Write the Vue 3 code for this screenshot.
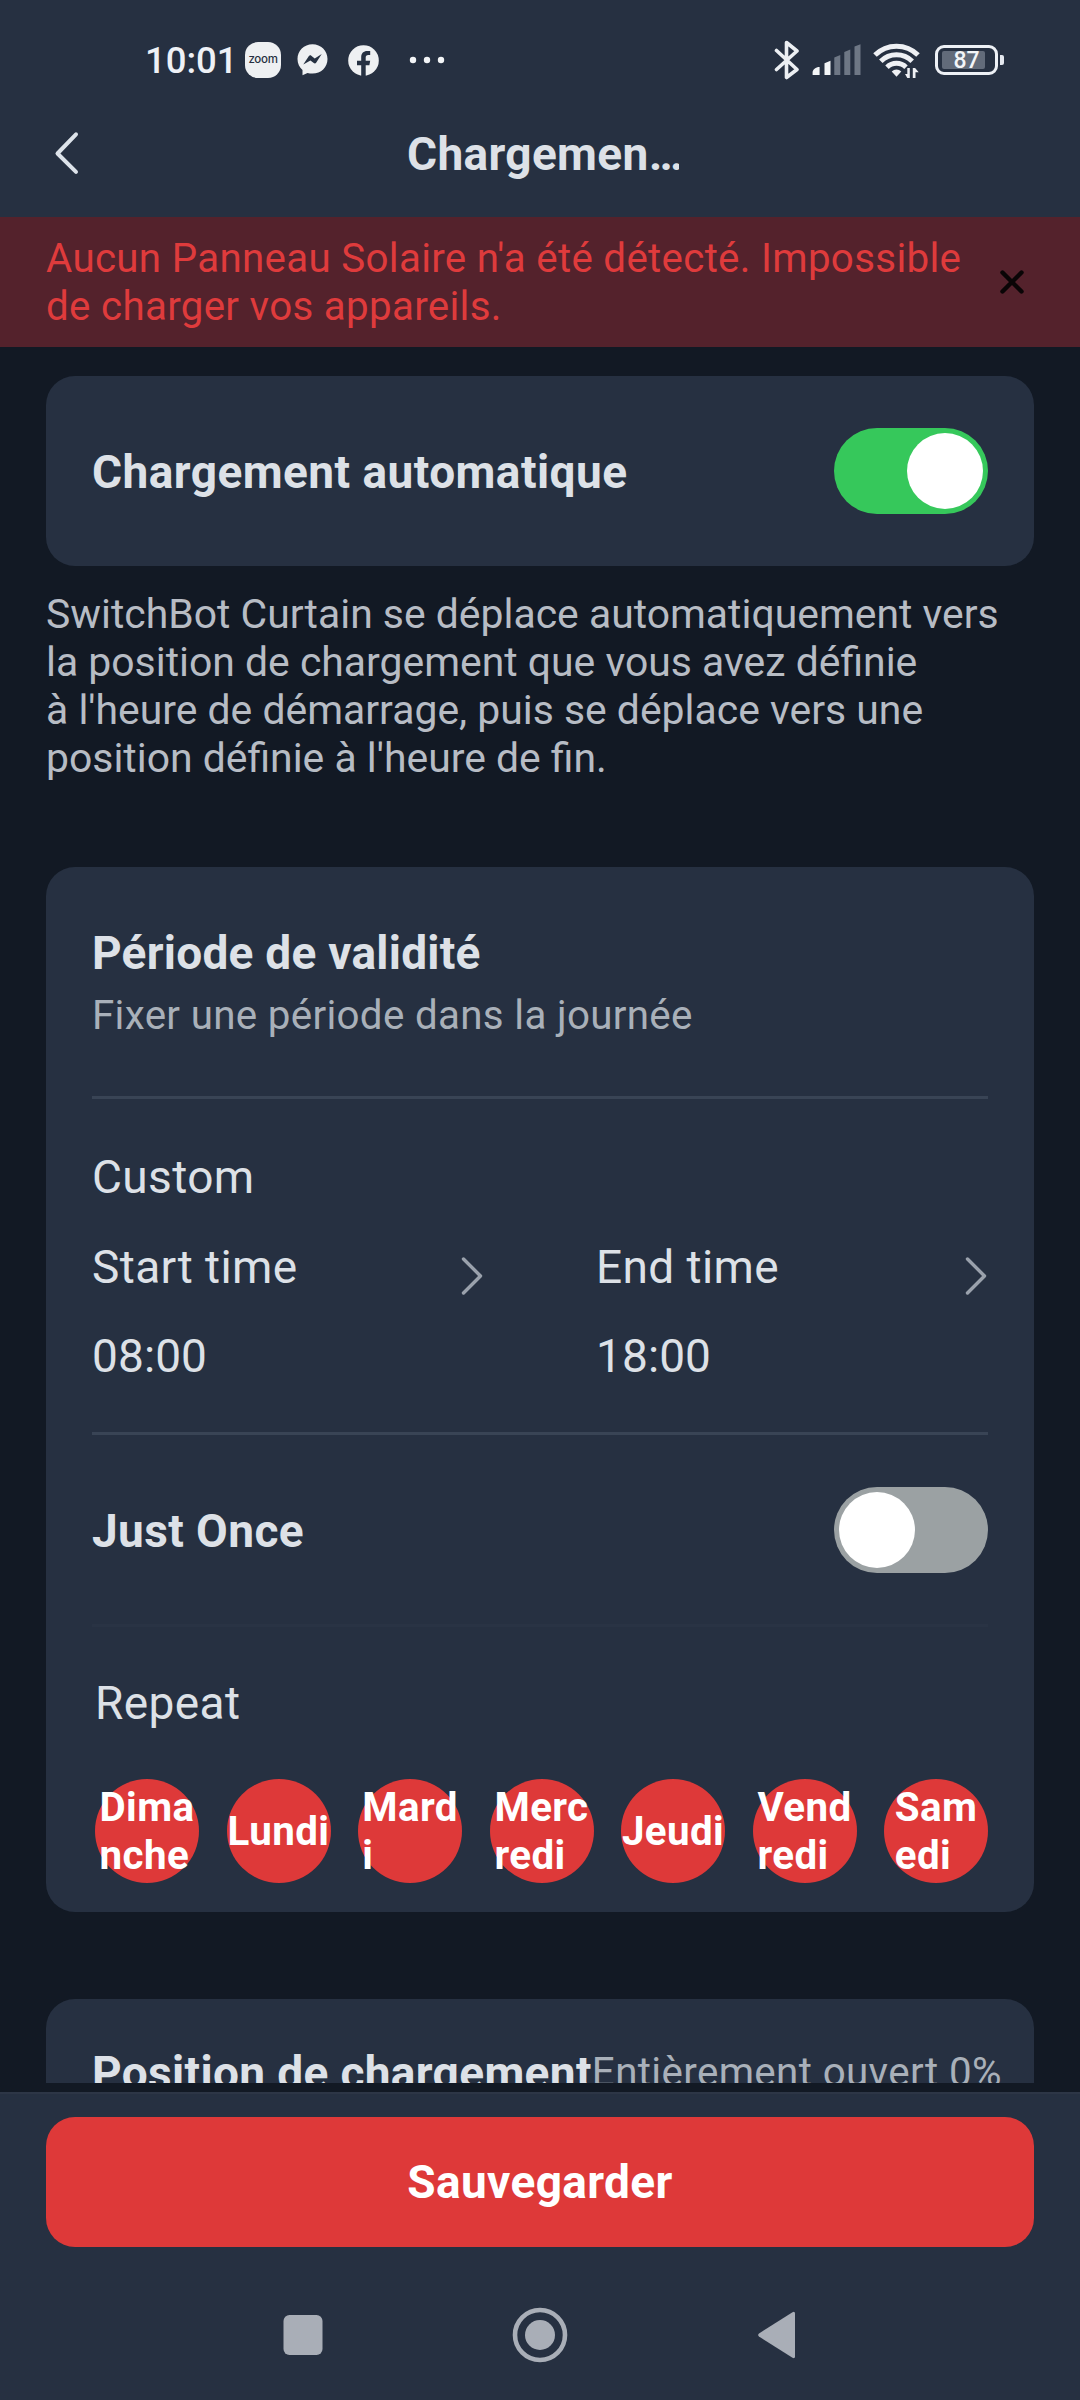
<script setup>
import { ref } from 'vue'

const autoCharge = ref(true)
const justOnce = ref(false)

const times = [
  { label: 'Start time', value: '08:00' },
  { label: 'End time', value: '18:00' },
]

// Each day name is split into the lines shown inside its circle
const days = [['Dima', 'nche'], ['Lundi'], ['Mard', 'i'], ['Merc', 'redi'], ['Jeudi'], ['Vend', 'redi'], ['Sam', 'edi']]
</script>

<template>
  <div class="screen">
    <header class="top">
      <div class="status">
        <span class="clock">10:01</span>
        <span class="zoom-app">zoom</span>
        <svg class="messenger" width="31" height="32" viewBox="0 0 31 32">
          <path fill="#eef0f2" d="M15.5 0.3C7 .3.5 6.700.5 15c0 4.700 1.900 8.300 5 11v5.200l5-2.200c1.600.4 3.200.6 5 .6 8.500 0 15-6.300 15-14.600S24 .3 15.500 .3z" />
          <path fill="#263142" d="M6.300 20.500l5.600-8.400c.6-.9 1.600-1 2.400-.4l3.400 2.700 7-4.400-5.400 8.600c-.6.9-1.700 1.100-2.500.5l-3.400-2.700z" />
        </svg>
        <svg class="facebook" width="31" height="31" viewBox="0 0 31 31">
          <circle cx="15.500" cy="15.500" r="15.300" fill="#eef0f2" />
          <path fill="#263142" d="M13.200 31V20.200H9v-4.500h4.200v-3.400c0-4 2.500-6.200 6-6.200h3v4h-1.900c-1.900 0-2.600 1.100-2.600 2.500v3.100h4.500l-.8 4.500h-3.700V31z" />
        </svg>
        <svg class="more" width="36" height="8" viewBox="0 0 36 8" fill="#f3f5f7">
          <circle cx="4" cy="4" r="3.200" /><circle cx="18" cy="4" r="3.200" /><circle cx="32" cy="4" r="3.200" />
        </svg>
        <span class="spacer"></span>
        <svg class="bluetooth" width="26" height="40" viewBox="0 0 26 40" fill="none" stroke="#eceff3" stroke-width="3.600" stroke-linejoin="round" stroke-linecap="round">
          <path d="M2.500 10.500L23 29.500 12.500 37.500V2.500L23 11 2.500 29.500" />
        </svg>
        <svg class="signal" width="49" height="32" viewBox="0 0 49 32">
          <path fill="#f3f5f7" d="M.6 31v-2.500c0-2.800 3-5.500 7-5.500V31zM12.500 31V19.200l6-2.400V31z" />
          <path fill="#6e7785" d="M22.300 31V13.500l6-2.500v20zM32.300 31V8l6-2.500V31zM42.500 31V2.500l6-2.200V31z" />
        </svg>
        <svg class="wifi" width="48" height="37" viewBox="0 0 48 37">
          <g fill="none" stroke="#eef0f4" stroke-width="5">
            <path d="M2 13a30.500 30.500 0 0 1 43 0" />
            <path d="M7.800 19.200a22.300 22.300 0 0 1 31.400 0" />
            <path d="M14 25.200a13.700 13.700 0 0 1 19 0" />
          </g>
          <path fill="#eef0f4" d="M18.700 29.500a7 7 0 0 1 9.600 0l-4.800 5.200z" />
          <path fill="#eef0f4" d="M36.800 26v10h-2.500l-2.300-4h2.300v-6zM39.800 36V26h2.300l3.600 4.200H42.500V36z" />
        </svg>
        <span class="battery"><span class="level"></span><span class="pct">87</span></span>
        <span class="nub"></span>
      </div>
      <div class="bar">
        <svg class="back" width="28" height="46" viewBox="0 0 28 46" fill="none" stroke="#dde3ea" stroke-width="4" stroke-linecap="round" stroke-linejoin="round">
          <path d="M23 4.300L4.500 23.500 23 41.800" />
        </svg>
        <h1>Chargemen…</h1>
      </div>
    </header>

    <div class="alert">
      <p>Aucun Panneau Solaire n'a été détecté. Impossible<br />de charger vos appareils.</p>
      <svg width="26" height="26" viewBox="0 0 26 26" stroke="#0a0506" stroke-width="4.400" stroke-linecap="round">
        <path d="M3.500 3.500L22.500 22.500M22.500 3.500L3.500 22.500" />
      </svg>
    </div>

    <main>
      <section class="card auto">
        <h2>Chargement automatique</h2>
        <button class="toggle" :class="{ on: autoCharge }" @click="autoCharge = !autoCharge"><i></i></button>
      </section>

      <p class="hint">
        SwitchBot Curtain se déplace automatiquement vers<br />la position de chargement que vous avez définie<br />à l'heure de démarrage, puis se déplace vers une<br />position définie à l'heure de fin.
      </p>

      <section class="card period">
        <h2>Période de validité</h2>
        <p class="sub">Fixer une période dans la journée</p>
        <hr />
        <div class="label custom">Custom</div>
        <div class="times">
          <div v-for="t in times" :key="t.label" class="time">
            <div class="time-head">
              <span class="label">{{ t.label }}</span>
              <svg width="24" height="42" viewBox="0 0 24 42" fill="none" stroke="#9aa1ac" stroke-width="3.400" stroke-linecap="round" stroke-linejoin="round">
                <path d="M3.500 4L20.500 21 3.500 38" />
              </svg>
            </div>
            <div class="label value">{{ t.value }}</div>
          </div>
        </div>
        <hr class="second" />
        <div class="once">
          <h2>Just Once</h2>
          <button class="toggle" :class="{ on: justOnce }" @click="justOnce = !justOnce"><i></i></button>
        </div>
        <hr class="faint" />
        <div class="label repeat">Repeat</div>
        <div class="days">
          <div v-for="d in days" :key="d[0]" class="day">
            <div><div v-for="part in d" :key="part">{{ part }}</div></div>
          </div>
        </div>
      </section>

      <section class="card position">
        <h2>Position de chargement</h2>
        <span>Entièrement ouvert 0%</span>
      </section>
    </main>

    <footer>
      <button class="save">Sauvegarder</button>
      <nav>
        <svg width="40" height="56" viewBox="0 0 40 56"><rect x="0.500" y="8" width="39" height="40" rx="6" fill="#a9aeb7" /></svg>
        <svg width="56" height="56" viewBox="0 0 56 56">
          <circle cx="28" cy="28" r="25" fill="none" stroke="#a9aeb7" stroke-width="4.600" />
          <circle cx="28" cy="28" r="15" fill="#a9aeb7" />
        </svg>
        <svg width="40" height="56" viewBox="0 0 40 56"><path d="M2 29.500Q.3 28 2 26.500L35.500 5.200Q38 4 38 6.500V49.500Q38 52 35.500 50.800Z" fill="#a9aeb7" /></svg>
      </nav>
    </footer>
  </div>
</template>

<style>
body {
  margin: 0;
  background: #121924;
}
</style>

<style scoped>
.screen {
  display: flex;
  flex-direction: column;
  width: 1080px;
  height: 2400px;
  overflow: hidden;
  background: #121924;
  color: #dde1e7;
  font-family: Roboto, "Liberation Sans", sans-serif;
}
h1, h2, p { margin: 0; }
button { border: 0; padding: 0; font: inherit; color: inherit; }
svg { display: block; flex: none; }

.top { height: 217px; background: #263041; flex: none; }
.status { display: flex; align-items: center; height: 120px; padding-left: 145px; padding-right: 76px; }
.clock { width: 100px; font-size: 36.500px; font-weight: 500; line-height: 40px; color: #eef1f6; padding-top: 2px; box-sizing: border-box; }
.zoom-app {
  width: 36px; height: 36px; border-radius: 13px; background: #eef0f2; color: #263041;
  font: 500 11.500px/35px Inter, sans-serif; text-align: center; letter-spacing: -0.3px;
}
.messenger { margin-left: 16px; }
.facebook { margin-left: 19.500px; }
.more { margin-left: 30.500px; }
.spacer { flex: 1; }
.signal { margin-left: 12px; }
.wifi { margin-left: 12px; }
.battery {
  position: relative; display: flex; align-items: center; justify-content: center;
  box-sizing: border-box; width: 63px; height: 30px; margin-left: 14px;
  border: 3px solid #eef1f6; border-radius: 9px;
}
.level { position: absolute; left: 4px; top: 3px; width: 43px; height: 18px; background: #626b7a; border-radius: 2px; }
.pct { position: relative; padding-top: 1px; font-size: 23px; font-weight: 500; line-height: 24px; color: #f3f5f8; }
.nub { width: 4px; height: 10px; margin-left: 2px; border-radius: 0 2px 2px 0; background: #e4e8ee; }
.bar { display: grid; grid-template-columns: 405px 273.500px 1fr; align-items: center; height: 67px; }
.back { margin-left: 53px; margin-top: -1px; }
h1 {
  padding-left: 2px; font-size: 46px; line-height: 54px; font-weight: 700; letter-spacing: 0.35px;
  white-space: nowrap; overflow: hidden;
}

.alert {
  display: flex; align-items: center; justify-content: space-between; flex: none;
  height: 130px; padding: 0 55px 0 46px; box-sizing: border-box;
  background: #54222c; color: #df3b3c; font-size: 40.320px; line-height: 48px; letter-spacing: 0.3px; white-space: nowrap;
}
.alert p { padding-top: 2px; }

main { height: 1736px; flex: none; overflow: hidden; padding: 29px 46px 0; box-sizing: border-box; }
.card { background: #263041; border-radius: 29px; box-sizing: border-box; padding: 0 46px; }
h2, .label { font-size: 46px; line-height: 54px; letter-spacing: 0.4px; white-space: nowrap; }
h2 { font-weight: 700; }
.value { letter-spacing: 0.1px; }
.auto { display: flex; align-items: center; justify-content: space-between; height: 190px; }
.auto h2 { padding-top: 2px; letter-spacing: 0.45px; }
.toggle { display: flex; width: 154px; height: 86px; padding: 5px; box-sizing: border-box; border-radius: 43px; background: #9ba1a3; }
.toggle i { width: 76px; height: 76px; border-radius: 50%; background: #fff; }
.toggle.on { justify-content: flex-end; background: #36c85b; }
.hint { margin-top: 24px; font-size: 40.900px; line-height: 48px; color: #b7bcc4; white-space: nowrap; }

.period { margin-top: 85px; height: 1045px; padding-top: 59px; }
.period > h2 { letter-spacing: 0.25px; }
.sub { margin-top: 12px; font-size: 40.320px; line-height: 48px; letter-spacing: 0.32px; color: #a9b0b9; }
hr { margin: 56px 0 0; height: 3px; border: 0; background: #394455; }
.custom { margin-top: 51px; }
.times { display: flex; justify-content: space-between; margin-top: 36px; }
.time { width: 392px; }
.time-head { display: flex; justify-content: space-between; margin-bottom: 35px; height: 54px; }
.time-head svg { margin-top: 15px; }
hr.second { margin-top: 49px; }
.once { display: flex; align-items: center; justify-content: space-between; margin-top: 52px; }
.once h2 { padding-top: 2px; }
hr.faint { margin-top: 51px; background: #293344; }
.repeat { margin: 49px 0 0 3px; }
.days { display: flex; justify-content: space-between; margin: 49px 0 0 3px; }
.day {
  display: flex; align-items: center; justify-content: center; width: 104px; height: 104px; padding-top: 1px; box-sizing: border-box;
  border-radius: 50%; background: #de3939; color: #fff; font-size: 40.320px; line-height: 48px; font-weight: 700; letter-spacing: 0.4px;
}

.position { display: flex; align-items: center; height: 148px; margin-top: 87px; white-space: nowrap; }
.position h2 { letter-spacing: 0.35px; }
.position span { font-size: 40.320px; line-height: 48px; letter-spacing: 0.37px; color: #a9b0b9; }

footer { flex: 1; margin-top: 9px; padding: 23px 46px 0; border-top: 2px solid #2d3646; background: #263041; }
.save {
  display: block; width: 988px; height: 130px; border-radius: 29px; background: #de3939;
  color: #fff; font-size: 46px; line-height: 130px; font-weight: 700; letter-spacing: 0.35px; text-align: center;
}
nav { display: flex; justify-content: space-between; width: 514px; margin: 60px 0 0 237px; }
</style>
